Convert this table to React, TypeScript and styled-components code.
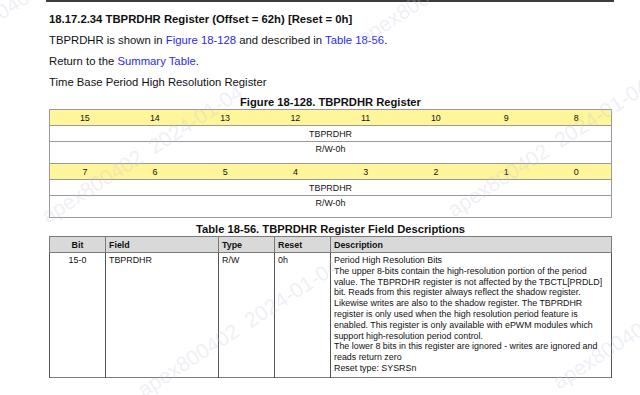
import React from 'react';
import styled, { createGlobalStyle } from 'styled-components';

const GlobalStyle = createGlobalStyle`
  html, body {
    margin: 0;
    padding: 0;
    background: #ffffff;
  }

  body {
    font-family: 'Liberation Sans', Arial, sans-serif;
    color: #111111;
  }
`;

const Page = styled.div`
  position: relative;
  width: 640px;
  height: 395px;
  overflow: hidden;
  background: #ffffff;
`;

const TopRule = styled.div`
  width: 568px;
  height: 2px;
  margin-left: 46px;
  background: #3c3c3c;
`;

const Content = styled.div`
  width: 563px;
  margin-top: 7px;
  margin-left: 49px;
`;

const Heading = styled.h3`
  margin: 0;
  font-size: 11.3px;
  line-height: 21px;
  font-weight: 700;
`;

const Para = styled.p`
  margin: 0;
  font-size: 11.3px;
  line-height: 21px;
`;

const DocLink = styled.a`
  color: #2a2af0;
  text-decoration: none;
`;

const Caption = styled.div<{ $gap: number }>`
  margin-top: ${({ $gap }) => `${$gap}px`};
  font-size: 11.2px;
  font-weight: 700;
  line-height: 14px;
  text-align: center;
`;

const RegTable = styled.table`
  width: 563px;
  border-collapse: collapse;
  table-layout: fixed;
  border: 1px solid #9a9a9a;
  font-size: 8.9px;
`;

const BitCell = styled.td`
  height: 15px;
  padding: 0;
  background: #fff59a;
  border-top: 1px solid #9a9a9a;
  border-bottom: 1px solid #9a9a9a;
  text-align: center;
  vertical-align: middle;
`;

const SpanCell = styled.td<{ $tall?: boolean }>`
  height: ${({ $tall }) => ($tall ? '19px' : '15px')};
  padding: ${({ $tall }) => ($tall ? '2px 0 0' : '0')};
  border-top: 1px solid #9a9a9a;
  text-align: center;
  vertical-align: ${({ $tall }) => ($tall ? 'top' : 'middle')};
  line-height: 10px;
`;

const FieldTable = styled.table`
  width: 563px;
  border-collapse: collapse;
  table-layout: fixed;
  border: 1px solid #7a7a7a;
  font-size: 8.9px;
`;

const HeadCell = styled.th<{ $center?: boolean }>`
  height: 15px;
  padding: 0 3px;
  background: #d9d9d9;
  border: 1px solid #7a7a7a;
  font-weight: 700;
  text-align: ${({ $center }) => ($center ? 'center' : 'left')};
  vertical-align: middle;
`;

const BodyCell = styled.td<{ $center?: boolean }>`
  height: 118px;
  padding: 2px 3px 3px;
  border-left: 1px solid #555555;
  border-right: 1px solid #555555;
  text-align: ${({ $center }) => ($center ? 'center' : 'left')};
  vertical-align: top;
  line-height: 10.8px;
`;

const Watermark = styled.span`
  position: absolute;
  transform-origin: 0 50%;
  transform: rotate(-33deg);
  font-family: 'Liberation Sans', Arial, sans-serif;
  font-size: 21px;
  line-height: 24px;
  color: rgba(196, 202, 224, 0.3);
  white-space: nowrap;
  pointer-events: none;
`;

const bits = [
  [15, 14, 13, 12, 11, 10, 9, 8],
  [7, 6, 5, 4, 3, 2, 1, 0],
];

const marks = [
  { x: -60, y: 40 },
  { x: 44, y: 206 },
  { x: 140, y: 380 },
  { x: 360, y: 28 },
  { x: 450, y: 200 },
  { x: 555, y: 372 },
];

const App = () => (
  <Page>
    <GlobalStyle />
    <TopRule />
    <Content>
      <Heading>18.17.2.34 TBPRDHR Register (Offset = 62h) [Reset = 0h]</Heading>
      <Para>
        TBPRDHR is shown in <DocLink href="#fig">Figure 18-128</DocLink> and described in{' '}
        <DocLink href="#tbl">Table 18-56</DocLink>.
      </Para>
      <Para>
        Return to the <DocLink href="#summary">Summary Table</DocLink>.
      </Para>
      <Para>Time Base Period High Resolution Register</Para>

      <Caption $gap={2}>Figure 18-128. TBPRDHR Register</Caption>
      <RegTable>
        <tbody>
          {bits.map(group => (
            <React.Fragment key={group[0]}>
              <tr>
                {group.map(bit => (
                  <BitCell key={bit}>{bit}</BitCell>
                ))}
              </tr>
              <tr>
                <SpanCell colSpan={8}>TBPRDHR</SpanCell>
              </tr>
              <tr>
                <SpanCell colSpan={8} $tall>
                  R/W-0h
                </SpanCell>
              </tr>
            </React.Fragment>
          ))}
        </tbody>
      </RegTable>

      <Caption $gap={4}>Table 18-56. TBPRDHR Register Field Descriptions</Caption>
      <FieldTable>
        <colgroup>
          <col style={{ width: 56 }} />
          <col style={{ width: 113 }} />
          <col style={{ width: 56 }} />
          <col style={{ width: 56 }} />
          <col />
        </colgroup>
        <thead>
          <tr>
            <HeadCell $center>Bit</HeadCell>
            <HeadCell>Field</HeadCell>
            <HeadCell>Type</HeadCell>
            <HeadCell>Reset</HeadCell>
            <HeadCell>Description</HeadCell>
          </tr>
        </thead>
        <tbody>
          <tr>
            <BodyCell $center>15-0</BodyCell>
            <BodyCell>TBPRDHR</BodyCell>
            <BodyCell>R/W</BodyCell>
            <BodyCell>0h</BodyCell>
            <BodyCell>
              <div>Period High Resolution Bits</div>
              <div>
                The upper 8-bits contain the high-resolution portion of the period value. The
                TBPRDHR register is not affected by the TBCTL[PRDLD] bit. Reads from this register
                always reflect the shadow register. Likewise writes are also to the shadow register.
                The TBPRDHR register is only used when the high resolution period feature is
                enabled. This register is only available with ePWM modules which support
                high-resolution period control.
              </div>
              <div>
                The lower 8 bits in this register are ignored - writes are ignored and reads return
                zero
              </div>
              <div>Reset type: SYSRSn</div>
            </BodyCell>
          </tr>
        </tbody>
      </FieldTable>
    </Content>

    {marks.map(m => (
      <Watermark key={`${m.x}-${m.y}`} style={{ left: m.x, top: m.y }}>
        apex800402&nbsp;&nbsp;2024-01-04
      </Watermark>
    ))}
  </Page>
);

export default App;
